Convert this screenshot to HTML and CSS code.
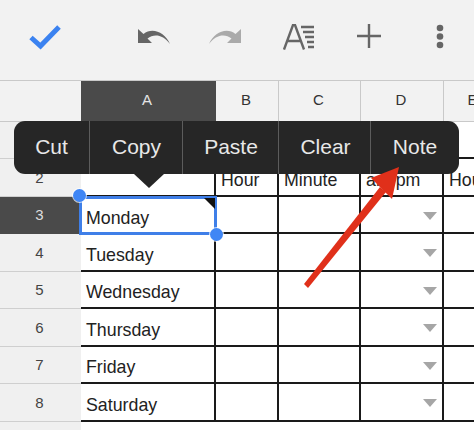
FILE: index.html
```html
<!DOCTYPE html>
<html lang="en">
<head>
    <meta charset="UTF-8">
    <meta name="viewport" content="width=device-width, initial-scale=1.0">
    <title>Sheet</title>
    <link rel="stylesheet" href="styles.css">
</head>
<body>
    <div class="screen">
        <!-- Toolbar -->
        <div class="toolbar">
            <svg class="icon check" width="34" height="26" viewBox="0 0 34 26"><path d="M3 13.5 L12.5 22 L31 3" fill="none" stroke="#3b82f0" stroke-width="5"/></svg>
            <svg class="icon undo" width="34" height="18" viewBox="0 0 34 18"><path d="M1 1 V15 H15 L10.5 10.5 C17 5.5 26 6.5 33 16 C28 4 15 -1 6.5 6 Z" fill="#666"/></svg>
            <svg class="icon redo" width="34" height="18" viewBox="0 0 34 18"><path d="M33 1 V15 H19 L23.5 10.5 C17 5.5 8 6.5 1 16 C6 4 19 -1 27.5 6 Z" fill="#aaa"/></svg>
            <svg class="icon format" width="32" height="26" viewBox="0 0 32 26"><path d="M1 25.5 L10 1 H12 L21 25.5 M4.5 17 H17.5" fill="none" stroke="#666" stroke-width="2.4"/><path d="M18 3 H31 M20 8 H31 M22 13 H31 M24 18 H31 M25 23 H31" stroke="#666" stroke-width="2.4"/></svg>
            <svg class="icon plus" width="24" height="24" viewBox="0 0 24 24"><path d="M12 0 V24 M0 12 H24" stroke="#666" stroke-width="2.4"/></svg>
            <svg class="icon more" width="8" height="26" viewBox="0 0 8 26"><circle cx="4" cy="4" r="3.3" fill="#666"/><circle cx="4" cy="12.5" r="3.3" fill="#666"/><circle cx="4" cy="21" r="3.3" fill="#666"/></svg>
        </div>

        <!-- Sheet -->
        <div class="sheet">
            <div class="col-head corner"></div>
            <div class="col-head active">A</div>
            <div class="col-head">B</div>
            <div class="col-head">C</div>
            <div class="col-head">D</div>
            <div class="col-head">E</div>

            <!-- row 1 is hidden under the menu -->
            <div class="row-head"></div>
            <div class="cell"></div><div class="cell"></div><div class="cell"></div><div class="cell"></div><div class="cell"></div>

            <div class="row-head">2</div>
            <div class="cell"></div><div class="cell">Hour</div><div class="cell">Minute</div><div class="cell">am/pm</div><div class="cell">Hour</div>

            <div class="row-head active">3</div>
            <div class="cell selected">Monday
                <span class="note-mark"></span>
                <span class="handle top"></span>
                <span class="handle bottom"></span>
            </div>
            <div class="cell"></div><div class="cell"></div><div class="cell pick"><i></i></div><div class="cell"></div>

            <div class="row-head">4</div>
            <div class="cell">Tuesday</div><div class="cell"></div><div class="cell"></div><div class="cell pick"><i></i></div><div class="cell"></div>

            <div class="row-head">5</div>
            <div class="cell">Wednesday</div><div class="cell"></div><div class="cell"></div><div class="cell pick"><i></i></div><div class="cell"></div>

            <div class="row-head">6</div>
            <div class="cell">Thursday</div><div class="cell"></div><div class="cell"></div><div class="cell pick"><i></i></div><div class="cell"></div>

            <div class="row-head">7</div>
            <div class="cell">Friday</div><div class="cell"></div><div class="cell"></div><div class="cell pick"><i></i></div><div class="cell"></div>

            <div class="row-head">8</div>
            <div class="cell">Saturday</div><div class="cell"></div><div class="cell"></div><div class="cell pick"><i></i></div><div class="cell"></div>

            <div class="row-head last"></div>
        </div>

        <!-- Context menu -->
        <div class="menu">
            <div class="menu-item cut">Cut</div>
            <div class="menu-item copy">Copy</div>
            <div class="menu-item paste">Paste</div>
            <div class="menu-item clear">Clear</div>
            <div class="menu-item note">Note</div>
        </div>

        <!-- Annotation -->
        <svg class="arrow" width="474" height="430" viewBox="0 0 474 430"><path d="M304 284 L308 288 L386 192 L380 187 Z" fill="#e0301a"/><path d="M399 167 L371 178 L392 199 Z" fill="#e0301a"/></svg>
    </div>
</body>
</html>
```

FILE: styles.css
```css
* {
    margin: 0;
    padding: 0;
    box-sizing: border-box;
}

body {
    font-family: "Liberation Sans", Arial, sans-serif;
    background: #fff;
}

.screen {
    position: relative;
    width: 474px;
    height: 430px;
    overflow: hidden;
}

.toolbar {
    height: 81px;
    background: #f2f2f2;
    border-bottom: 1px solid #c9c9c9;
    display: flex;
    align-items: flex-start;
}

.icon {
    display: block;
    flex: none;
}

.check { margin: 24px 0 0 28px; }
.undo { margin: 28px 0 0 75px; }
.redo { margin: 28px 0 0 37px; }
.format { margin: 24px 0 0 41px; }
.plus { margin: 24px 0 0 42px; }
.more { margin: 24px 0 0 55px; }

.sheet {
    display: grid;
    grid-template-columns: 81px 135px 63px 82px 83px 60px;
    grid-template-rows: 41px 37px;
    grid-auto-rows: 37.5px;
}

.col-head {
    background: #f2f2f2;
    border-right: 1px solid #c9c9c9;
    border-bottom: 1px solid #c9c9c9;
    color: #333;
    font-size: 15px;
    display: flex;
    align-items: center;
    justify-content: center;
    padding: 0 2px 4px 0;
}

.col-head.corner {
    border-right: none;
}

.col-head.active {
    background: #4a4a4a;
    border-color: #4a4a4a;
    color: #e4e4e4;
}

.row-head {
    background: #f0f0f0;
    border-bottom: 1px solid #cfcfcf;
    color: #444;
    font-size: 15px;
    display: flex;
    align-items: center;
    justify-content: center;
    padding-right: 2px;
}

.row-head.active {
    background: #4a4a4a;
    border-color: #4a4a4a;
    color: #ddd;
}

.row-head.last {
    border-bottom: none;
}

.cell {
    position: relative;
    border-right: 2px solid #1a1a1a;
    border-bottom: 2px solid #1a1a1a;
    color: #222;
    font-size: 17.8px;
    white-space: nowrap;
    overflow: hidden;
    display: flex;
    align-items: flex-end;
    padding: 0 0 4px 5px;
}

.cell.pick {
    align-items: center;
    justify-content: flex-end;
    padding: 3px 5px 0 0;
}

.cell.pick i {
    width: 0;
    height: 0;
    border-left: 7.5px solid transparent;
    border-right: 7.5px solid transparent;
    border-top: 8px solid #a6a6a6;
}

.cell.selected {
    overflow: visible;
    border: none;
    padding-bottom: 5px;
    z-index: 1;
}

/* blue box sits a bit outside of the cell */
.cell.selected::before {
    content: "";
    position: absolute;
    left: -2px;
    top: -1px;
    right: -1px;
    bottom: -1px;
    border: 3px solid #3f7fe8;
}

.note-mark {
    position: absolute;
    top: 1px;
    right: 1px;
    width: 0;
    height: 0;
    border-top: 11px solid #111;
    border-left: 11px solid transparent;
}

.handle {
    position: absolute;
    width: 13px;
    height: 13px;
    background: #3f86f5;
    border-radius: 50%;
    box-shadow: 0 0 0 1px rgba(255, 255, 255, 0.7);
}

.handle.top {
    left: -8px;
    top: -8px;
}

.handle.bottom {
    right: -7px;
    bottom: -7px;
}

.menu {
    position: absolute;
    left: 14px;
    top: 121px;
    width: 445px;
    height: 53px;
    background: #262626;
    border-radius: 11px;
    display: flex;
    z-index: 2;
}

.menu::after {
    content: "";
    position: absolute;
    left: 120px;
    top: 53px;
    width: 0;
    height: 0;
    border-left: 15px solid transparent;
    border-right: 15px solid transparent;
    border-top: 14px solid #262626;
}

.menu-item {
    color: #e8e8e8;
    font-size: 21px;
    display: flex;
    align-items: center;
    justify-content: center;
    border-right: 1px solid #5c5c5c;
    padding-bottom: 1px;
}

.menu-item.cut { width: 76px; }
.menu-item.copy { width: 93px; padding-left: 1px; }
.menu-item.paste { width: 96px; padding-left: 1px; }
.menu-item.clear { width: 92px; padding-left: 2px; }
.menu-item.note { flex: 1; border-right: none; }

.arrow {
    position: absolute;
    left: 0;
    top: 0;
    z-index: 3;
}
```
